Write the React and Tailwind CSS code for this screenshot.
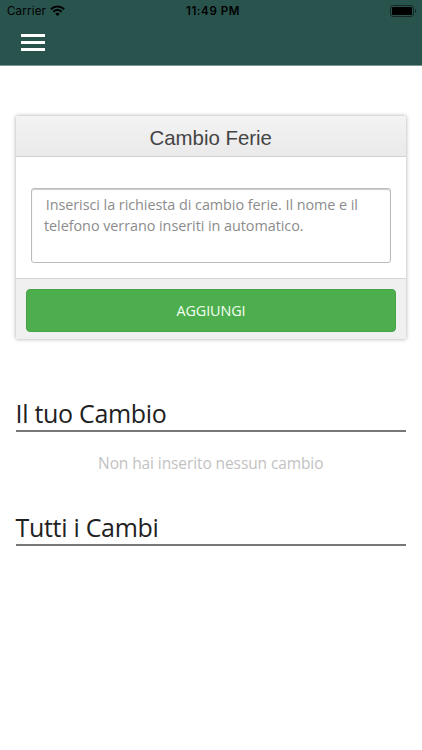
function StatusBar() {
  return (
    <div className="relative flex h-[22px] items-center justify-between pr-[5px] pl-[7px] font-['Inter',sans-serif] text-[11px] text-black">
      <div className="flex items-center gap-[4px] pt-px">
        <span className="text-[11.5px] tracking-[0.2px]">Carrier</span>
        <svg className="mb-[2px]" width="15" height="11" viewBox="0 0 15 11" fill="none" stroke="currentColor" strokeWidth="2">
          <path d="M0.9 4.2a9.3 9.3 0 0 1 13.2 0" />
          <path d="M3.3 6.7a5.9 5.9 0 0 1 8.4 0" />
          <path d="M7.5 11 5.3 8.8a3.1 3.1 0 0 1 4.4 0z" fill="currentColor" stroke="none" />
        </svg>
      </div>
      <span className="absolute top-[3px] left-[213px] -translate-x-1/2 text-[11.5px] leading-[17px] font-semibold tracking-[0.6px] whitespace-nowrap">11:49 PM</span>
      <svg className="mb-px" width="27" height="12" viewBox="0 0 27 12">
        <rect x="0.5" y="0.5" width="23" height="11" rx="2.5" fill="none" stroke="black" strokeOpacity="0.5" />
        <rect x="2" y="2" width="20" height="8" rx="1" />
        <path d="M25 4v4c1.6-.7 1.6-3.3 0-4z" fillOpacity="0.5" />
      </svg>
    </div>
  );
}

function Section({ title, children, className }) {
  return (
    <section className={className}>
      <h2 className="h-[34px] border-b-2 border-[#777] text-[25px] leading-[30px] tracking-[-0.3px] text-[#212121]">{title}</h2>
      {children}
    </section>
  );
}

export default function App() {
  return (
    <div className="min-h-[750px] bg-white font-['Open_Sans',sans-serif]">
      <header className="h-[66px] border-b border-[#7c9693] bg-[#29534d]">
        <StatusBar />
        <button aria-label="Menu" className="mt-[12px] ml-[20.5px] flex w-[24.5px] flex-col gap-[4px]">
          <span className="h-[3px] bg-white" />
          <span className="h-[3px] bg-white" />
          <span className="h-[3px] bg-white" />
        </button>
      </header>

      <main className="pt-[50px] pr-[16px] pl-[15.5px]">
        <form className="h-[223px] bg-white shadow-[0_0_4px_rgba(0,0,0,0.35)]">
          <h1 className="h-[41px] border-b border-[#d2d2d2] bg-linear-to-b from-[#f3f3f3] to-[#eaeaea] text-center font-['Liberation_Sans',sans-serif] text-[20.4px] leading-[44px] text-[#444]">
            Cambio Ferie
          </h1>
          <div className="h-[121px] pt-[31px] pr-[15px] pl-[15.5px]">
            <textarea
              className="block h-[75px] w-full resize-none rounded-[3px] border border-[#bbb] px-3 pt-[6px] text-[14.4px] leading-[20.5px] tracking-[-0.05px] text-[#8c8c8c] shadow-[inset_0_1px_1px_#ccc] outline-none [text-indent:-2px]"
              defaultValue={" Inserisci la richiesta di cambio ferie. Il nome e il telefono verrano inseriti in automatico."}
            />
          </div>
          <div className="h-[61px] border-t border-[#d6d6d6] bg-[#f0f0f0] pt-[10px] pr-[10px] pl-[10.5px]">
            <button type="button" className="h-[43px] w-full rounded-[4px] border border-[#46a349] bg-[#4cae4c] text-[14.4px] tracking-[-0.1px] text-[#f4fff4]">
              AGGIUNGI
            </button>
          </div>
        </form>

        <Section title="Il tuo Cambio" className="mt-[59px]">
          <p className="pt-[20px] text-center text-[15.5px] leading-[22px] tracking-[-0.1px] text-[#c2c2c2]">Non hai inserito nessun cambio</p>
        </Section>
        <Section title="Tutti i Cambi" className="mt-[38px]" />
      </main>
    </div>
  );
}
